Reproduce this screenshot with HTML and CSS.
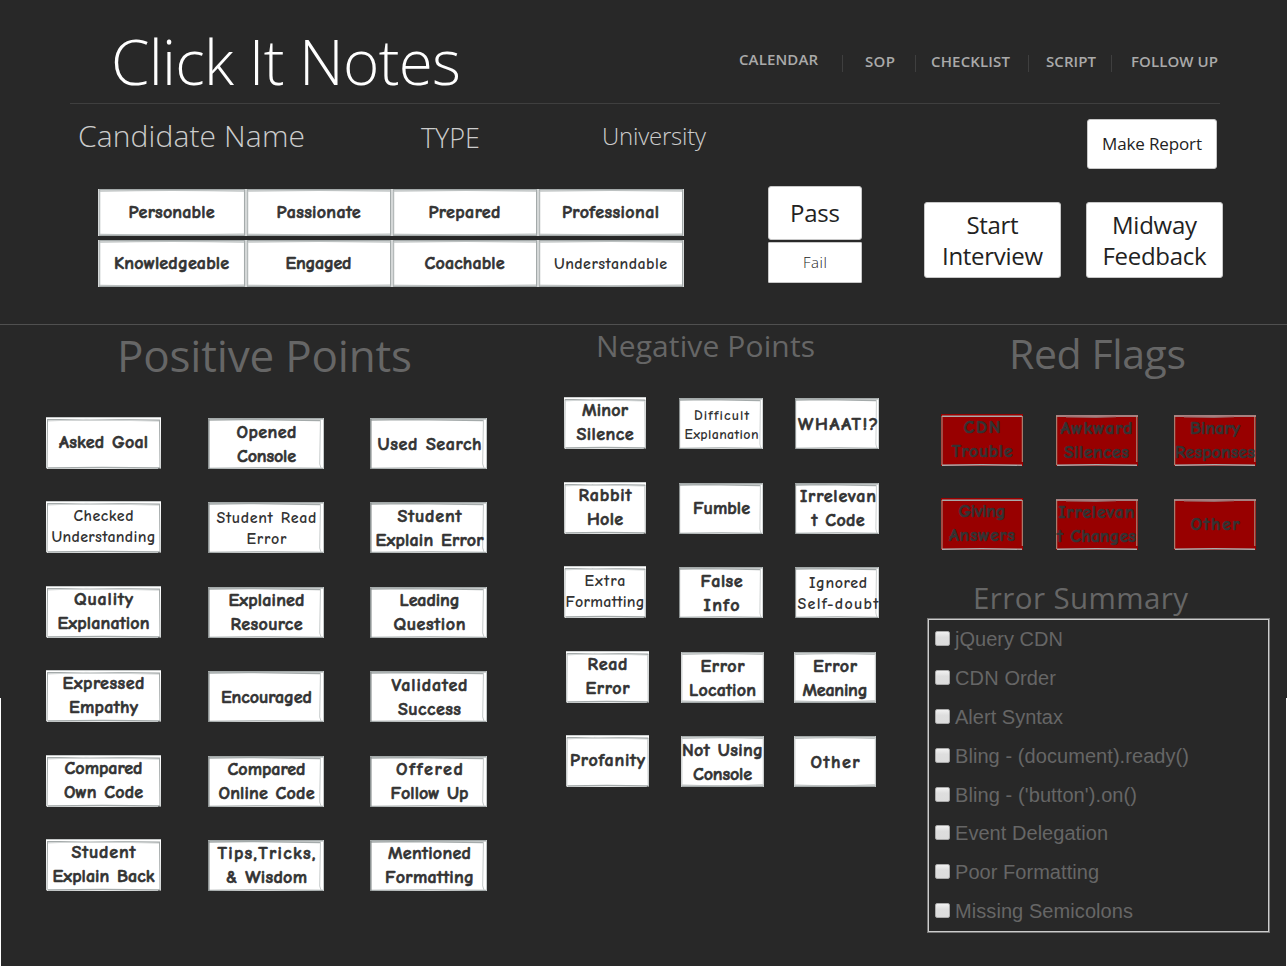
FILE: index.html
```html
<!DOCTYPE html>
<html lang="en">
<head>
<meta charset="utf-8">
<title>Click It Notes</title>
<link rel="stylesheet" href="styles.css">
</head>
<body>
<div class="page">
  <header class="header">
    <h1 class="title"><span data-w="350">Click It Notes</span></h1>
    <nav class="nav">
      <a class="nav-calendar"><span data-w="79">CALENDAR</span></a>
      <a class="nav-sop"><span data-w="30">SOP</span></a>
      <a class="nav-checklist"><span data-w="79">CHECKLIST</span></a>
      <a class="nav-script"><span data-w="50">SCRIPT</span></a>
      <a class="nav-follow"><span data-w="87">FOLLOW UP</span></a>
    </nav>
  </header>

  <section class="candidate">
    <div class="info">
      <div class="fields">
        <div class="name"><span data-w="227">Candidate Name</span></div>
        <div class="type"><span data-w="59">TYPE</span></div>
        <div class="university"><span data-w="104">University</span></div>
      </div>
      <div class="ratings">
        <button class="sketch"><span data-w="86">Personable</span></button>
        <button class="sketch"><span data-w="84">Passionate</span></button>
        <button class="sketch"><span data-w="72">Prepared</span></button>
        <button class="sketch"><span data-w="97">Professional</span></button>
        <button class="sketch"><span data-w="115">Knowledgeable</span></button>
        <button class="sketch"><span data-w="66">Engaged</span></button>
        <button class="sketch"><span data-w="80">Coachable</span></button>
        <button class="sketch light"><span data-w="113">Understandable</span></button>
      </div>
    </div>
    <div class="verdict">
      <button class="plain pass"><span data-w="50">Pass</span></button>
      <button class="plain fail"><span data-w="24">Fail</span></button>
    </div>
    <div class="actions">
      <button class="plain report"><span data-w="100">Make Report</span></button>
      <button class="plain big"><span data-w="52">Start</span><span data-w="101">Interview</span></button>
      <button class="plain big"><span data-w="85">Midway</span><span data-w="104">Feedback</span></button>
    </div>
  </section>

  <main class="board">
    <section class="positive">
      <h2><span data-w="295">Positive Points</span></h2>
      <div class="grid">
        <button class="sketch first"><span data-w="89">Asked Goal</span></button>
        <button class="sketch shifted"><span data-w="60">Opened</span><span data-w="59">Console</span></button>
        <button class="sketch shifted"><span data-w="104">Used Search</span></button>
        <button class="sketch first light"><span data-w="60">Checked</span><span data-w="104">Understanding</span></button>
        <button class="sketch shifted light"><span data-w="100">Student Read</span><span data-w="40">Error</span></button>
        <button class="sketch shifted"><span data-w="64">Student</span><span data-w="108">Explain Error</span></button>
        <button class="sketch first"><span data-w="59">Quality</span><span data-w="92">Explanation</span></button>
        <button class="sketch shifted"><span data-w="76">Explained</span><span data-w="72">Resource</span></button>
        <button class="sketch shifted"><span data-w="60">Leading</span><span data-w="72">Question</span></button>
        <button class="sketch first"><span data-w="82">Expressed</span><span data-w="69">Empathy</span></button>
        <button class="sketch shifted"><span data-w="91">Encouraged</span></button>
        <button class="sketch shifted"><span data-w="76">Validated</span><span data-w="63">Success</span></button>
        <button class="sketch first"><span data-w="78">Compared</span><span data-w="79">Own Code</span></button>
        <button class="sketch shifted"><span data-w="78">Compared</span><span data-w="96">Online Code</span></button>
        <button class="sketch shifted"><span data-w="67">Offered</span><span data-w="78">Follow Up</span></button>
        <button class="sketch first"><span data-w="64">Student</span><span data-w="102">Explain Back</span></button>
        <button class="sketch shifted"><span data-w="98">Tips,Tricks,</span><span data-w="81">&amp; Wisdom</span></button>
        <button class="sketch shifted"><span data-w="83">Mentioned</span><span data-w="89">Formatting</span></button>
      </div>
    </section>

    <section class="negative">
      <h2><span data-w="219">Negative Points</span></h2>
      <div class="grid upper">
        <button class="sketch first"><span data-w="46">Minor</span><span data-w="57">Silence</span></button>
        <button class="sketch shifted tiny"><span data-w="55">Difficult</span><span data-w="74">Explanation</span></button>
        <button class="sketch shifted"><span data-w="80">WHAAT!?</span></button>
        <button class="sketch first"><span data-w="53">Rabbit</span><span data-w="36">Hole</span></button>
        <button class="sketch shifted"><span data-w="57">Fumble</span></button>
        <button class="sketch shifted"><span data-w="76">Irrelevan</span><span data-w="53">t Code</span></button>
        <button class="sketch first light"><span data-w="41">Extra</span><span data-w="79">Formatting</span></button>
        <button class="sketch shifted"><span data-w="42">False</span><span data-w="36">Info</span></button>
        <button class="sketch shifted light"><span data-w="58">Ignored</span><span data-w="81">Self-doubt</span></button>
      </div>
      <div class="grid lower">
        <button class="sketch first"><span data-w="40">Read</span><span data-w="44">Error</span></button>
        <button class="sketch"><span data-w="44">Error</span><span data-w="67">Location</span></button>
        <button class="sketch"><span data-w="44">Error</span><span data-w="65">Meaning</span></button>
        <button class="sketch first"><span data-w="75">Profanity</span></button>
        <button class="sketch"><span data-w="81">Not Using</span><span data-w="59">Console</span></button>
        <button class="sketch"><span data-w="49">Other</span></button>
      </div>
    </section>

    <section class="flags">
      <h2><span data-w="177">Red Flags</span></h2>
      <div class="grid">
        <button class="sketch red first"><span data-w="37">CDN</span><span data-w="61">Trouble</span></button>
        <button class="sketch red"><span data-w="72">Awkward</span><span data-w="65">Silences</span></button>
        <button class="sketch red"><span data-w="50">Binary</span><span data-w="80">Responses</span></button>
        <button class="sketch red first"><span data-w="47">Giving</span><span data-w="66">Answers</span></button>
        <button class="sketch red"><span data-w="76">Irrelevan</span><span data-w="79">t Changes</span></button>
        <button class="sketch red"><span data-w="49">Other</span></button>
      </div>
      <h3><span data-w="215">Error Summary</span></h3>
      <div class="errors">
        <label><i class="check"></i><span data-w="108">jQuery CDN</span></label>
        <label><i class="check"></i><span data-w="101">CDN Order</span></label>
        <label><i class="check"></i><span data-w="108">Alert Syntax</span></label>
        <label><i class="check"></i><span data-w="234">Bling - (document).ready()</span></label>
        <label><i class="check"></i><span data-w="182">Bling - ('button').on()</span></label>
        <label><i class="check"></i><span data-w="153">Event Delegation</span></label>
        <label><i class="check"></i><span data-w="144">Poor Formatting</span></label>
        <label><i class="check"></i><span data-w="178">Missing Semicolons</span></label>
      </div>
    </section>
  </main>
  <div class="edge edge-left"></div>
  <div class="edge edge-right"></div>
  <div class="edge edge-right-low"></div>
</div>
<script src="fit.js"></script>
</body>
</html>
```

FILE: styles.css
```css
* { box-sizing: border-box; }
body { margin: 0; background: #282828; font-family: "Open Sans", "Noto Sans", sans-serif; }
.page { position: relative; width: 1288px; height: 966px; overflow: hidden; background: #282828; }
span[data-w] { display: inline-block; white-space: pre; }
button { border: 0; margin: 0; padding: 0; font-family: inherit; }

/* header */
.header { display: flex; width: 1150px; height: 104px; margin-left: 70px; border-bottom: 1px solid #3f3f3f; }
.title { width: 669px; margin: 21px 0 0; padding-left: 41px; font-size: 62px; line-height: 80px; font-weight: 300; color: #fff; }
.nav { display: flex; align-items: flex-start; padding-top: 55px; font-size: 15px; font-weight: 600; color: #aaa; }
.nav a { height: 17px; line-height: 13px; border-left: 1px solid #3f3f3f; white-space: nowrap; }
.nav .nav-calendar { width: 103px; border: 0; line-height: 9px; }
.nav-sop { width: 73px; padding-left: 22px; }
.nav-checklist { width: 113px; padding-left: 15px; }
.nav-script { width: 83px; padding-left: 17px; }
.nav-follow { width: 109px; padding-left: 19px; }

/* candidate */
.candidate { display: flex; height: 221px; border-bottom: 1px solid #505050; }
.info { width: 768px; }
.fields { display: flex; height: 85px; padding: 11px 0 0 78px; font-weight: 300; color: #ccc; line-height: 42px; }
.name { width: 343px; font-size: 30px; }
.type { width: 181px; font-size: 27px; padding-top: 2px; }
.university { font-size: 24px; }
.ratings { display: grid; grid-template-columns: 148px 146px 146px 146px; grid-auto-rows: 47px; row-gap: 4px; padding-left: 98px; }
.ratings .sketch { padding-right: 1px; padding-top: 1px; }
.verdict { display: flex; flex-direction: column; gap: 2px; width: 156px; padding-top: 82px; }
.plain { display: flex; flex-direction: column; align-items: center; justify-content: center; background: #fff; border: 1px solid #c8c8c8; border-radius: 3px; color: #222; font-weight: 400; }
.plain.pass { width: 94px; height: 54px; padding-bottom: 2px; font-size: 24px; }
.plain.fail { width: 94px; height: 41px; padding-bottom: 2px; font-size: 15px; border-radius: 1px; font-weight: 350; }
.actions { display: grid; grid-template-columns: 137px 137px; grid-template-rows: 50px 76px; column-gap: 25px; row-gap: 33px; padding-top: 15px; align-content: start; }
.report { grid-column: 2; width: 130px; margin-left: 1px; padding-bottom: 2px; font-size: 17px; }
.big { font-size: 24px; line-height: 31px; padding-bottom: 1px; }
.pass, .big, .report { font-weight: 370; }

/* hand-drawn buttons */
.sketch {
  display: flex; flex-direction: column; align-items: center; justify-content: center;
  font-family: "Comic Neue", "Comic Sans MS", Lato, sans-serif; font-size: 18px; line-height: 24px; font-weight: 900; word-spacing: 1px; color: #333;
  -webkit-text-stroke: 0.6px currentColor;
  background: #fff url("data:image/svg+xml,%3Csvg xmlns='http://www.w3.org/2000/svg' viewBox='0 0 146 47' preserveAspectRatio='none'%3E%3Cg fill='none' stroke='%23a4aaaa'%3E%3Cpath d='M0 .7H146M0 46.3H146' stroke-width='1.4'/%3E%3Cpath d='M.5 0V47M145.5 0V47' stroke='%23d5d8d8'/%3E%3Cpath d='M1.7 1V46M144.5 1V46'/%3E%3Cpath d='M2 2.2Q73 .8 144 2.2M2 45.2Q73 46.5 144 45' stroke='%23bcc1c1'/%3E%3C/g%3E%3C/svg%3E") 0 0 / 100% 100% no-repeat;
}
.light { font-size: 16px; line-height: 21px; -webkit-text-stroke-width: 0; }
.tiny { font-size: 14px; line-height: 19px; -webkit-text-stroke-width: 0; }
.first {
  background-image: url("data:image/svg+xml,%3Csvg xmlns='http://www.w3.org/2000/svg' viewBox='0 0 115 52' preserveAspectRatio='none'%3E%3Cg fill='none' stroke='%23a4aaaa'%3E%3Cpath d='M0 .5H115' stroke='%23c5c8c8'/%3E%3Cpath d='M1 2.8H70L114 3.2M2 51Q55 50.2 114 51' stroke-width='1.5'/%3E%3Cpath d='M1 51L1.5 3M114 51L113.5 3'/%3E%3Cpath d='M2 4L40 2.4L113 4.2' stroke='%23d5d8d8'/%3E%3C/g%3E%3Cpath d='M0 51.2H1.2V52H0ZM112 51.5H115V52H112Z' fill='%23282828'/%3E%3C/svg%3E");
}
.shifted {
  background-image: url("data:image/svg+xml,%3Csvg xmlns='http://www.w3.org/2000/svg' viewBox='0 0 116 51' preserveAspectRatio='none'%3E%3Cg fill='none' stroke='%23a4aaaa'%3E%3Cpath d='M0 .8H116' stroke-width='1.5'/%3E%3Cpath d='M1 2L40 1.6L112 2.5M1 50.3Q60 49.3 115 50.3' stroke-width='1.3'/%3E%3Cpath d='M.8 51V1' stroke-width='1.5' stroke='%23888e8e'/%3E%3Cpath d='M112.5 1L111.7 46L113 50M115.5 0V51' stroke='%23c5caca'/%3E%3C/g%3E%3C/svg%3E");
}
.sketch.red {
  background-color: #980000;
  background-image: url("data:image/svg+xml,%3Csvg xmlns='http://www.w3.org/2000/svg' viewBox='0 0 82 51' preserveAspectRatio='none'%3E%3Cg fill='none' stroke='%23aaa'%3E%3Cpath d='M0 1H82M1 50.3Q40 49.2 81 50.3' stroke-width='1.4'/%3E%3Cpath d='M.7 1V50M80.8 1V47' stroke='%23a98'/%3E%3Cpath d='M10 2L40 2.5L60 1.8' stroke='%23966'/%3E%3C/g%3E%3C/svg%3E");
}
.sketch.red.first {
  background-image: url("data:image/svg+xml,%3Csvg xmlns='http://www.w3.org/2000/svg' viewBox='0 0 82 52' preserveAspectRatio='none'%3E%3Cg fill='none' stroke='%23aaa'%3E%3Cpath d='M1 2.3H81M1 51.3Q40 50.2 81 51.3' stroke-width='1.4'/%3E%3Cpath d='M1 2V51M81.3 2V48' stroke='%23a98'/%3E%3C/g%3E%3C/svg%3E");
}
.grid { display: grid; align-items: end; }
.grid .sketch { height: 51px; padding-top: 2px; }
.grid .shifted { padding-left: 2px; }
.grid .sketch.first { height: 52px; padding-top: 0; padding-bottom: 0; }
h2, h3 { margin: 0; font-weight: 400; color: #666; white-space: nowrap; }

/* board */
.board { display: grid; grid-template-columns: 564px 363px 1fr; height: 641px; }
.positive h2 { padding-left: 117px; font-size: 44px; line-height: 60px; height: 92px; }
.positive .grid { grid-template-columns: 115px 116px 117px; column-gap: 46.5px; row-gap: 32.4px; padding-left: 46px; }
.negative h2 { padding-left: 32px; font-size: 30px; line-height: 42px; height: 72px; }
.upper { grid-template-columns: 82px 84px 84px; column-gap: 32.5px; row-gap: 32.5px; }
.lower { grid-template-columns: 83px 83px 82px; column-gap: 32px; row-gap: 32px; padding-left: 2px; margin-top: 33px; }
.lower .sketch:nth-child(3n) { margin-left: -2px; margin-right: 2px; }
.flags h2 { padding-left: 82px; font-size: 41px; line-height: 56px; height: 89px; }
.flags .grid { grid-template-columns: 82px 82px 82px; column-gap: 34.5px; row-gap: 32px; padding-left: 14px; }
.flags .sketch { padding-top: 1px; padding-bottom: 1px; }
.flags .sketch:nth-child(3n + 2) { margin-left: -2px; margin-right: 2px; }
.flags h3 { padding-left: 46px; margin-top: 27px; font-size: 29.5px; line-height: 42px; height: 41px; }

/* error summary */
.errors { width: 343px; height: 315px; border: 1px solid #777; outline: 1px solid #ccc; outline-offset: -2px; padding: 1px 0 0 7px; color: #666; font-family: "Liberation Sans", Arial, sans-serif; font-size: 20px; }
.errors label { display: flex; align-items: center; gap: 5px; height: 38.9px; }
.check { width: 15px; height: 15px; margin-bottom: 2px; border: 1px solid #aaa; border-radius: 2px; background: linear-gradient(#f1f1f1, #dedede 40%, #dcdcdc); }

/* white slivers along the window edges */
.edge { position: absolute; width: 1px; background: #fff; }
.edge-left { left: 0; top: 698px; bottom: 0; }
.edge-right { right: 0; top: 0; bottom: 0; }
.edge-right-low { right: 1px; top: 698px; bottom: 0; }
```

FILE: fit.js
```js
// Tracks each label so that its line takes the width given in data-w.
document.querySelectorAll('span[data-w]').forEach(function (el) {
  var extra = parseFloat(el.dataset.w) - el.getBoundingClientRect().width;
  var step = extra / (el.textContent.length - 1);
  el.style.letterSpacing = step.toFixed(3) + 'px';
  el.style.marginRight = (-step).toFixed(3) + 'px';
});
```
